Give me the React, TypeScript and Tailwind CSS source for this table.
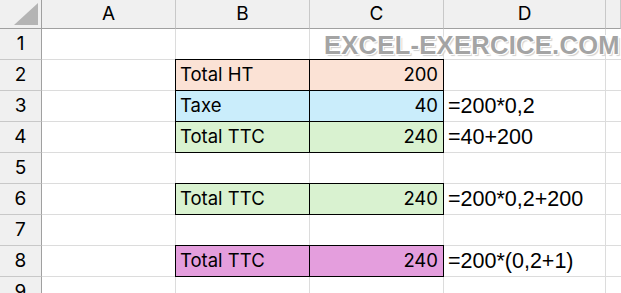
const cols = ["A", "B", "C", "D", ""];

type Row = {
  label?: string;
  value?: string;
  formula?: string;
  bg?: string;
};

const rows: Row[] = [
  {},
  { label: "Total HT", value: "200", bg: "bg-[#fbe2d5]" },
  { label: "Taxe", value: "40", formula: "=200*0,2", bg: "bg-[#caedfb]" },
  { label: "Total TTC", value: "240", formula: "=40+200", bg: "bg-[#d9f2d0]" },
  {},
  { label: "Total TTC", value: "240", formula: "=200*0,2+200", bg: "bg-[#d9f2d0]" },
  {},
  { label: "Total TTC", value: "240", formula: "=200*(0,2+1)", bg: "bg-[#e49edd]" },
  {},
];

export default function App() {
  return (
    <div className="relative w-[621px] h-[293px] overflow-hidden bg-white font-['Inter',sans-serif] text-black">
      <div className="grid grid-cols-[42px_134px_134px_134px_162px_1fr] grid-rows-[29px_repeat(9,31px)]">
        {/* header row */}
        <div className="relative bg-[#f0f0f0] border-r border-b border-[#a0a0a0]">
          <div className="absolute right-[3px] bottom-[3px] w-0 h-0 border-l-[24px] border-l-transparent border-b-[22px] border-b-[#b4b4b4]" />
        </div>
        {cols.map((c, i) => (
          <div
            key={i}
            className="flex items-center justify-center bg-[#f0f0f0] border-r border-r-[#c8c8c8] border-b border-b-[#a0a0a0] text-[19px]"
          >
            {c}
          </div>
        ))}

        {rows.map((r, i) => (
          <RowCells key={i} n={i + 1} row={r} />
        ))}
      </div>

      {/* watermark */}
      <div className="absolute left-[324px] top-[26px] font-['Liberation_Sans',Arial,sans-serif] font-bold text-[25.5px] tracking-[0.3px] text-[#a4a4a4] [text-shadow:1px_1px_0_#fff,-1px_-1px_0_#fff,1px_-1px_0_#fff,-1px_1px_0_#fff,2px_2px_1px_#d0d0d0] select-none">
        EXCEL-EXERCICE.COM
      </div>
    </div>
  );
}

function RowCells({ n, row }: { n: number; row: Row }) {
  const boxed = !!row.label;
  return (
    <>
      <div className="flex items-center justify-center bg-[#f0f0f0] border-r border-r-[#a0a0a0] border-b border-b-[#c8c8c8] text-[19px]">
        {n}
      </div>
      <div className="border-r border-b border-[#dcdcdc]" />
      {boxed ? (
        <>
          <div
            className={`flex items-center pl-[4px] text-[18.5px] border border-black -mt-px -ml-px ${row.bg}`}
          >
            {row.label}
          </div>
          <div
            className={`flex items-center justify-end pr-[5px] text-[18.5px] border border-black border-l-0 -mt-px ${row.bg}`}
          >
            {row.value}
          </div>
        </>
      ) : (
        <>
          <div className="border-r border-b border-[#dcdcdc]" />
          <div className="border-r border-b border-[#dcdcdc]" />
        </>
      )}
      <div className="flex items-center pl-[4px] border-r border-b border-[#dcdcdc] font-['Liberation_Sans',Arial,sans-serif] text-[21.5px] whitespace-nowrap">
        {row.formula}
      </div>
      <div className="border-b border-[#dcdcdc]" />
    </>
  );
}
